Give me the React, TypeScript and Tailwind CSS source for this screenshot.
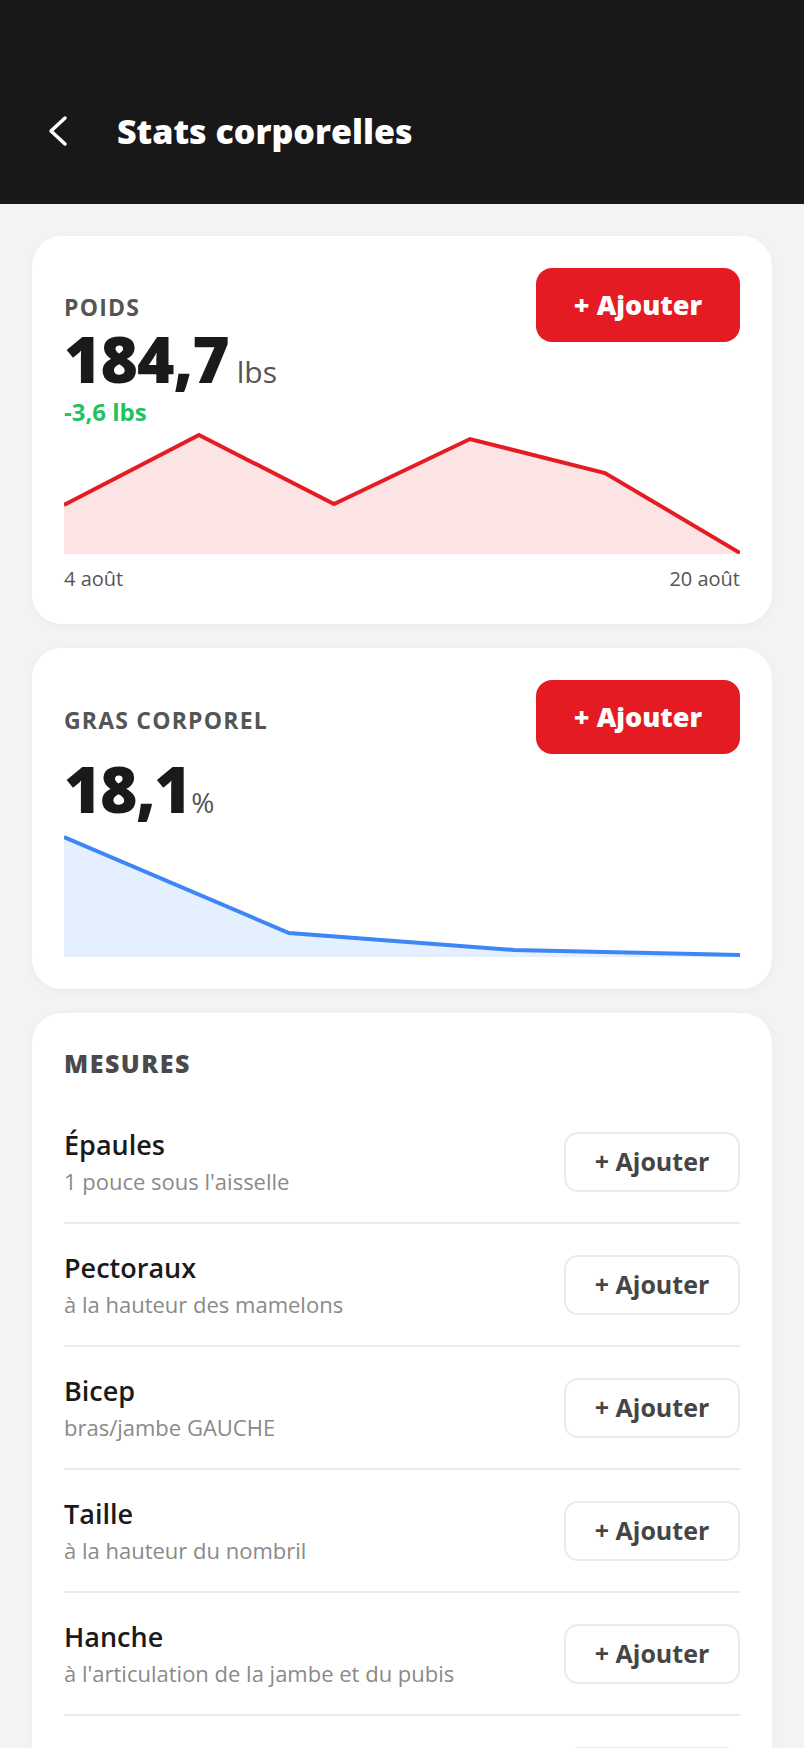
import React from "react";

const weightPoints = [
  [0, 75],
  [135, 5],
  [270, 74],
  [406, 9],
  [541, 43],
  [676, 123],
];

const fatPoints = [
  [0, 2],
  [225, 98],
  [450, 115],
  [676, 120],
];

const measures = [
  { name: "Épaules", hint: "1 pouce sous l'aisselle" },
  { name: "Pectoraux", hint: "à la hauteur des mamelons" },
  { name: "Bicep", hint: "bras/jambe GAUCHE" },
  { name: "Taille", hint: "à la hauteur du nombril" },
  { name: "Hanche", hint: "à l'articulation de la jambe et du pubis" },
  { name: "Cuisse", hint: "bras/jambe GAUCHE" },
  { name: "Mollet", hint: "bras/jambe GAUCHE" },
];

function AreaChart({
  points,
  height,
  line,
  fill,
}: {
  points: number[][];
  height: number;
  line: string;
  fill: string;
}) {
  const pts = points.map((p) => p.join(",")).join(" ");
  const area = `0,${height} ${pts} 676,${height}`;
  return (
    <svg
      viewBox={`0 0 676 ${height}`}
      preserveAspectRatio="none"
      className="block w-full"
      style={{ height }}
    >
      <polygon points={area} fill={fill} />
      <polyline
        points={pts}
        fill="none"
        stroke={line}
        strokeWidth={4}
        strokeLinejoin="miter"
        vectorEffect="non-scaling-stroke"
      />
    </svg>
  );
}

function RedButton() {
  return (
    <button className="flex h-[74px] w-[204px] shrink-0 items-center justify-center rounded-[16px] bg-[#e51b24] text-[27px] font-extrabold text-white">
      + Ajouter
    </button>
  );
}

function MeasureRow({ name, hint }: { name: string; hint: string }) {
  return (
    <div className="flex items-center justify-between border-b-2 border-[#ebebeb] pt-[27px] pb-[26px]">
      <div className="flex flex-col">
        <span className="text-[27px] leading-[34px] font-semibold text-[#1a1a1a]">
          {name}
        </span>
        <span className="mt-[4px] text-[22px] leading-[30px] text-[#8a8a8a]">
          {hint}
        </span>
      </div>
      <button className="flex h-[60px] w-[176px] items-center justify-center rounded-[14px] border-2 border-[#ebebeb] text-[25px] font-bold text-[#454545]">
        + Ajouter
      </button>
    </div>
  );
}

export default function App() {
  return (
    <div className="min-h-screen bg-[#f3f3f3] font-['Open_Sans',sans-serif]">
      <header className="flex h-[204px] items-center bg-[#181818] pt-[58px] pl-[46px]">
        <svg width="24" height="32" viewBox="0 0 24 32" fill="none">
          <path
            d="M19 3 L5 16 L19 29"
            stroke="white"
            strokeWidth="3.5"
            strokeLinecap="round"
            strokeLinejoin="round"
          />
        </svg>
        <h1 className="ml-[47px] text-[34px] font-extrabold text-white">
          Stats corporelles
        </h1>
      </header>

      <main className="flex flex-col gap-6 px-8 pt-8 pb-8">
        {/* Poids */}
        <section className="rounded-[30px] bg-white p-8 shadow-[0_2px_8px_rgba(0,0,0,0.04)]">
          <div className="flex items-start justify-between">
            <div className="flex flex-col">
              <span className="mt-[24px] text-[23px] leading-[30px] font-bold tracking-[1.2px] text-[#555]">
                POIDS
              </span>
              <div className="mt-[1px] flex items-baseline">
                <span className="text-[64px] leading-[72px] font-extrabold tracking-[-1px] text-[#1a1a1a]">
                  184,7
                </span>
                <span className="ml-2 text-[30px] text-[#555]">lbs</span>
              </div>
              <span className="mt-[2px] text-[24px] leading-[30px] font-bold text-[#22c35e]">
                -3,6 lbs
              </span>
            </div>
            <RedButton />
          </div>
          <div className="mt-[3px]">
            <AreaChart points={weightPoints} height={124} line="#e41c24" fill="#fce3e4" />
          </div>
          <div className="mt-3 flex justify-between text-[20px] leading-[26px] text-[#555]">
            <span>4 août</span>
            <span>20 août</span>
          </div>
        </section>

        {/* Gras corporel */}
        <section className="rounded-[30px] bg-white p-8 shadow-[0_2px_8px_rgba(0,0,0,0.04)]">
          <div className="flex items-start justify-between">
            <div className="flex flex-col">
              <span className="mt-[25px] text-[23px] leading-[30px] font-bold tracking-[1.2px] text-[#555]">
                GRAS CORPOREL
              </span>
              <div className="mt-[18px] flex items-baseline">
                <span className="text-[64px] leading-[72px] font-extrabold tracking-[-1.5px] text-[#1a1a1a]">
                  18,1
                </span>
                <span className="ml-[1px] text-[28px] text-[#555]">%</span>
              </div>
            </div>
            <RedButton />
          </div>
          <div className="mt-[10px]">
            <AreaChart points={fatPoints} height={122} line="#3d86f5" fill="#e4efff" />
          </div>
        </section>

        {/* Mesures */}
        <section className="rounded-[30px] bg-white px-8 pt-8 shadow-[0_2px_8px_rgba(0,0,0,0.04)]">
          <h2 className="text-[25px] leading-[36px] font-extrabold tracking-[1.5px] text-[#4a4a4a]">
            MESURES
          </h2>
          <div className="mt-5 flex flex-col">
            {measures.map((m) => (
              <MeasureRow key={m.name} name={m.name} hint={m.hint} />
            ))}
          </div>
        </section>
      </main>
    </div>
  );
}
